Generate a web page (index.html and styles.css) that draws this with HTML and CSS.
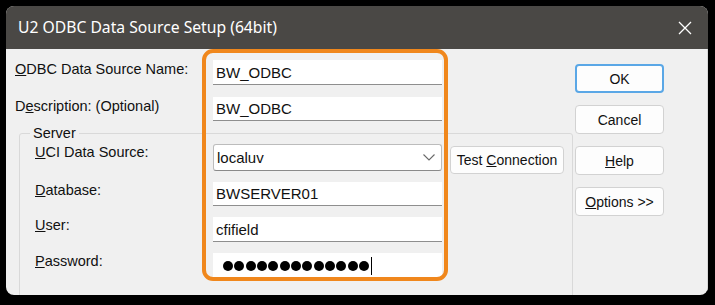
FILE: index.html
```html
<!DOCTYPE html>
<html>
<head>
<meta charset="utf-8">
<link rel="stylesheet" href="styles.css">
</head>
<body>
<div class="window">
  <div class="titlebar">
    <span class="title">U2 ODBC Data Source Setup (64bit)</span>
    <svg class="close" width="14" height="14" viewBox="0 0 14 14"><path d="M1 1 L13 13 M13 1 L1 13" stroke="#ffffff" stroke-width="1.3" fill="none"/></svg>
  </div>
  <div class="content">
    <div class="left">
      <div class="row r1"><label class="lbl"><u>O</u>DBC Data Source Name:</label><div class="input">BW_ODBC</div></div>
      <div class="row r2"><label class="lbl">D<u>e</u>scription: (Optional)</label><div class="input">BW_ODBC</div></div>
      <div class="group">
        <span class="legend">Server</span>
        <div class="row g1"><label class="lbl glbl"><u>U</u>CI Data Source:</label><div class="combo"><span>localuv</span><svg width="12" height="7" viewBox="0 0 12 7"><path d="M0.5 0.5 L6 6 L11.5 0.5" stroke="#6a6a6a" stroke-width="1.1" fill="none"/></svg></div><button class="btn test"><span>Test <u>C</u>onnection</span></button></div>
        <div class="row g2"><label class="lbl glbl"><u>D</u>atabase:</label><div class="input">BWSERVER01</div></div>
        <div class="row g3"><label class="lbl glbl"><u>U</u>ser:</label><div class="input">cfifield</div></div>
        <div class="row g4"><label class="lbl glbl"><u>P</u>assword:</label><div class="input pw"><span class="dot"></span><span class="dot"></span><span class="dot"></span><span class="dot"></span><span class="dot"></span><span class="dot"></span><span class="dot"></span><span class="dot"></span><span class="dot"></span><span class="dot"></span><span class="dot"></span><span class="dot"></span><span class="dot"></span><span class="caret"></span></div></div>
      </div>
    </div>
    <div class="buttons">
      <button class="btn ok"><span>OK</span></button>
      <button class="btn"><span>Cancel</span></button>
      <button class="btn"><span><u>H</u>elp</span></button>
      <button class="btn"><span><u>O</u>ptions &gt;&gt;</span></button>
    </div>
    <div class="highlight"></div>
  </div>
</div>
</body>
</html>
```

FILE: styles.css
```css
html, body {
  margin: 0;
  padding: 0;
}
body {
  background: #000;
  width: 715px;
  height: 305px;
  overflow: hidden;
  font-family: "Liberation Sans", Arial, sans-serif;
}
.window {
  margin: 6px 0 0 6px;
  width: 702px;
  height: 289px;
  border-radius: 8px;
  overflow: hidden;
  background: #f0f0f0;
  display: flex;
  flex-direction: column;
}
.titlebar {
  height: 43px;
  flex: none;
  background: #4a4845;
  display: flex;
  align-items: center;
  padding-left: 12px;
  padding-right: 16px;
  color: #fff;
}
.title {
  font-family: "Noto Sans", "Open Sans", sans-serif;
  font-size: 15.7px;
  flex: 1;
  padding-bottom: 1px;
}
.close {
  display: block;
}
.content {
  position: relative;
  flex: 1;
  display: flex;
  border-right: 1px solid #d8d8d8;
}
.left {
  width: 560px;
  padding-left: 9px;
  padding-top: 11px;
  flex: none;
}
.row {
  display: flex;
  align-items: flex-start;
}
.lbl {
  width: 198px;
  flex: none;
  font-size: 14.5px;
  line-height: 17px;
  margin-top: 1px;
  color: #111;
}
.glbl {
  width: 178px;
  margin-top: 0;
}
.input {
  width: 229px;
  height: 24px;
  box-sizing: border-box;
  background: #fff;
  border-bottom: 1px solid #8e8e8e;
  font-size: 15px;
  line-height: 23px;
  padding-left: 3px;
  color: #111;
  display: flex;
  align-items: center;
}
.r1 .input { height: 25px; }
.r2 { margin-top: 12px; }
.group {
  position: relative;
  margin-top: 12px;
  margin-left: 4px;
  width: 554px;
  height: 170px;
  box-sizing: border-box;
  border: 1px solid #d9d9d9;
  border-radius: 3px;
  padding: 10px 0 0 15px;
}
.legend {
  position: absolute;
  left: 10px;
  top: -10px;
  padding: 0 3px;
  background: #f0f0f0;
  font-size: 14.5px;
  line-height: 18px;
  color: #111;
}
.g1 { height: 27px; }
.combo {
  width: 229px;
  height: 27px;
  box-sizing: border-box;
  background: #fff;
  border: 1px solid #bcbcbc;
  border-bottom-color: #8a8a8a;
  border-radius: 3px;
  display: flex;
  align-items: center;
  justify-content: space-between;
  padding: 0 6px 0 3px;
  font-size: 15px;
  color: #111;
}
.combo svg { display: block; }
.g2, .g3, .g4 { margin-top: 11px; }
.g3 .input { height: 25px; }
.pw {
  padding-left: 10px;
  gap: 1.33px;
  height: 26px;
  align-items: center;
}
.dot {
  width: 10px;
  height: 10px;
  border-radius: 50%;
  background: #000;
  flex: none;
}
.caret {
  width: 1px;
  height: 18px;
  background: #000;
  margin-left: 1px;
}
.btn {
  display: flex;
  align-items: center;
  justify-content: center;
  width: 89px;
  height: 29px;
  box-sizing: border-box;
  background: #fdfdfd;
  border: 1px solid #d2d2d2;
  border-radius: 4px;
  font-family: "Liberation Sans", Arial, sans-serif;
  font-size: 14px;
  color: #111;
  padding: 0;
  margin: 0;
}
.test {
  width: 114px;
  height: 28px;
  margin-left: 8px;
  margin-top: 2px;
}
.buttons {
  display: flex;
  flex-direction: column;
  gap: 12px;
  padding-top: 15px;
}
.ok {
  border: 2px solid #5aa7e6;
}
.highlight {
  position: absolute;
  left: 196px;
  top: 0px;
  width: 246px;
  height: 232px;
  box-sizing: border-box;
  border: 4px solid #f0871c;
  border-radius: 11px;
}
```
